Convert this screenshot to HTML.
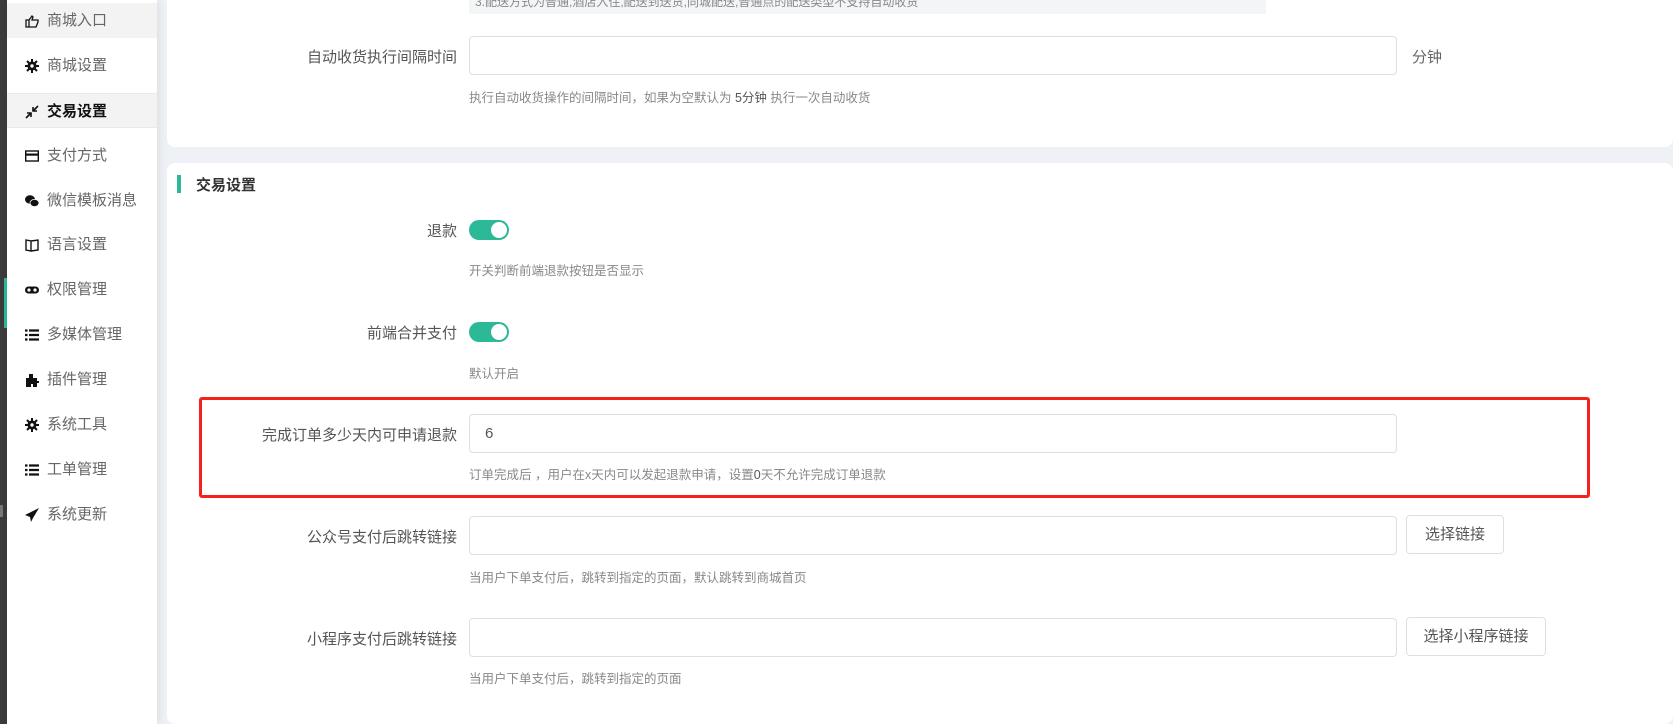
<!DOCTYPE html>
<html style="overflow:hidden;height:724px"><head><meta charset="utf-8"><style>
*{margin:0;padding:0;box-sizing:border-box}
body{width:1673px;height:724px;overflow:hidden;background:#eef1f5;font-family:"Liberation Sans","Noto Sans CJK SC",sans-serif;position:relative;color:#606266}
.strip{position:absolute;left:0;top:0;width:7px;height:724px;background:#3b3b3b}
.side{position:absolute;left:7px;top:0;width:150px;height:724px;background:#fff;box-shadow:2px 0 8px rgba(0,0,0,.08)}
.it{position:absolute;left:0;width:150px;height:35px;line-height:35px;font-size:15px;color:#666;padding-left:40px}
.it.hl{background:#f3f3f3}
.it.act{color:#111;font-weight:bold;border-top:1px solid #eaeaea;border-bottom:1px solid #eaeaea}
.ic{position:absolute;left:18px;top:11px;width:14px;height:14px}
.bar{position:absolute;left:4px;top:278px;width:3px;height:50px;background:#2bb998}
.card{position:absolute;left:167px;right:0;background:#fff;border-radius:8px}
.lbl{position:absolute;right:1216px;font-size:15px;color:#555;white-space:nowrap}
.inp{position:absolute;left:469px;width:928px;height:39px;border:1px solid #dcdfe6;border-radius:4px;background:#fff;font-size:15px;color:#555;padding-left:15px;line-height:37px}
.help{position:absolute;left:469px;font-size:12.5px;color:#888;white-space:nowrap}
.tg{position:absolute;left:469px;width:40px;height:20px;border-radius:10px;background:#2bb998}
.tg:after{content:"";position:absolute;right:2px;top:2px;width:16px;height:16px;border-radius:50%;background:#fff}
.btn{position:absolute;left:1406px;height:39px;border:1px solid #dcdfe6;border-radius:4px;background:#fff;font-size:15px;color:#555;text-align:center;line-height:37px}
</style></head><body>
<div class="strip"></div>
<div style="position:absolute;left:0;top:505px;width:3px;height:12px;background:#777"></div>
<div class="bar"></div>
<div class="side">
<div class="it hl" style="top:3px"><svg class="ic" viewBox="0 0 14 14"><path d="M1 6h3v7H1zM4 6l3-4 1 1-1 3h6v2l-2 5H4" fill="none" stroke="#111" stroke-width="1.3"/></svg>商城入口</div>
<div class="it" style="top:48px"><svg class="ic" viewBox="0 0 14 14"><circle cx="7" cy="7" r="4.5" fill="#111"/><path d="M7 0v14M0 7h14M2 2l10 10M12 2L2 12" stroke="#111" stroke-width="2"/><circle cx="7" cy="7" r="1.7" fill="#fff"/></svg>商城设置</div>
<div class="it hl act" style="top:93px"><svg class="ic" viewBox="0 0 14 14"><path d="M1 13l5-5M8 6l5-5M2 8h4v4M8 2v4h4" stroke="#111" stroke-width="1.6" fill="none"/></svg>交易设置</div>
<div class="it" style="top:138px"><svg class="ic" viewBox="0 0 14 14"><rect x="0.7" y="2" width="12.6" height="10" fill="none" stroke="#111" stroke-width="1.4"/><rect x="1" y="4.5" width="12" height="2.2" fill="#111"/></svg>支付方式</div>
<div class="it" style="top:183px"><svg class="ic" viewBox="0 0 14 14"><ellipse cx="5" cy="5.5" rx="5" ry="4.2" fill="#111"/><ellipse cx="9.5" cy="9" rx="4.5" ry="3.6" fill="#111" stroke="#fff" stroke-width=".8"/></svg>微信模板消息</div>
<div class="it" style="top:227px"><svg class="ic" viewBox="0 0 14 14"><path d="M1 2l5 1v10l-5-1zM6 3l7-1v10l-7 1" fill="none" stroke="#111" stroke-width="1.4"/></svg>语言设置</div>
<div class="it" style="top:272px"><svg class="ic" viewBox="0 0 14 14"><rect x="0" y="3.5" width="14" height="7" rx="3.5" fill="#111"/><circle cx="4" cy="7" r="1.6" fill="#fff"/><circle cx="10" cy="7" r="1.6" fill="#fff"/></svg>权限管理</div>
<div class="it" style="top:317px"><svg class="ic" viewBox="0 0 14 14"><path d="M0 2.5h2.5M0 7h2.5M0 11.5h2.5M4 2.5h10M4 7h10M4 11.5h10" stroke="#111" stroke-width="2.2"/></svg>多媒体管理</div>
<div class="it" style="top:362px"><svg class="ic" viewBox="0 0 14 14"><path d="M1 5h3V1h4v4h4v3h2v2h-2v4H8v-3H6v3H1z" fill="#111"/></svg>插件管理</div>
<div class="it" style="top:407px"><svg class="ic" viewBox="0 0 14 14"><circle cx="7" cy="7" r="4.5" fill="#111"/><path d="M7 0v14M0 7h14M2 2l10 10M12 2L2 12" stroke="#111" stroke-width="2"/><circle cx="7" cy="7" r="1.7" fill="#fff"/></svg>系统工具</div>
<div class="it" style="top:452px"><svg class="ic" viewBox="0 0 14 14"><path d="M0 2.5h2.5M0 7h2.5M0 11.5h2.5M4 2.5h10M4 7h10M4 11.5h10" stroke="#111" stroke-width="2.2"/></svg>工单管理</div>
<div class="it" style="top:497px"><svg class="ic" viewBox="0 0 14 14"><path d="M14 0L0 7l5 2 1 5 2-4z" fill="#111"/></svg>系统更新</div>
</div>

<div class="card" style="top:-20px;height:167px"></div>
<div style="position:absolute;left:469px;top:0;width:797px;height:14px;background:#f4f5f7;font-size:12px;color:#888;line-height:4px;padding-left:6px;overflow:hidden">3.配送方式为普通,酒店入住,配送到送货,同城配送,普通点的配送类型不支持自动收货</div>
<div class="lbl" style="top:46px">自动收货执行间隔时间</div>
<div class="inp" style="top:36px"></div>
<div style="position:absolute;left:1412px;top:46px;font-size:15px;color:#666">分钟</div>
<div class="help" style="top:87px">执行自动收货操作的间隔时间，如果为空默认为 <span style="color:#555">5分钟</span> 执行一次自动收货</div>

<div class="card" style="top:163px;bottom:0"></div>
<div style="position:absolute;left:177px;top:175px;width:4px;height:18px;background:#2bb998"></div>
<div style="position:absolute;left:196px;top:174px;font-size:15px;font-weight:bold;color:#333">交易设置</div>

<div class="lbl" style="top:220px">退款</div>
<div class="tg" style="top:220px"></div>
<div class="help" style="top:260px">开关判断前端退款按钮是否显示</div>

<div class="lbl" style="top:322px">前端合并支付</div>
<div class="tg" style="top:322px"></div>
<div class="help" style="top:363px">默认开启</div>

<div style="position:absolute;left:199px;top:397px;width:1391px;height:101px;border:3px solid #f5221b;border-radius:3px"></div>
<div class="lbl" style="top:424px">完成订单多少天内可申请退款</div>
<div class="inp" style="top:414px">6</div>
<div class="help" style="top:464px">订单完成后 ，用户在x天内可以发起退款申请，设置<span style="color:#555">0</span>天不允许完成订单退款</div>

<div class="lbl" style="top:526px">公众号支付后跳转链接</div>
<div class="inp" style="top:516px"></div>
<div class="btn" style="top:515px;width:98px">选择链接</div>
<div class="help" style="top:567px">当用户下单支付后，跳转到指定的页面，默认跳转到商城首页</div>

<div class="lbl" style="top:628px">小程序支付后跳转链接</div>
<div class="inp" style="top:618px"></div>
<div class="btn" style="top:617px;width:140px">选择小程序链接</div>
<div class="help" style="top:668px">当用户下单支付后，跳转到指定的页面</div>
</body></html>
